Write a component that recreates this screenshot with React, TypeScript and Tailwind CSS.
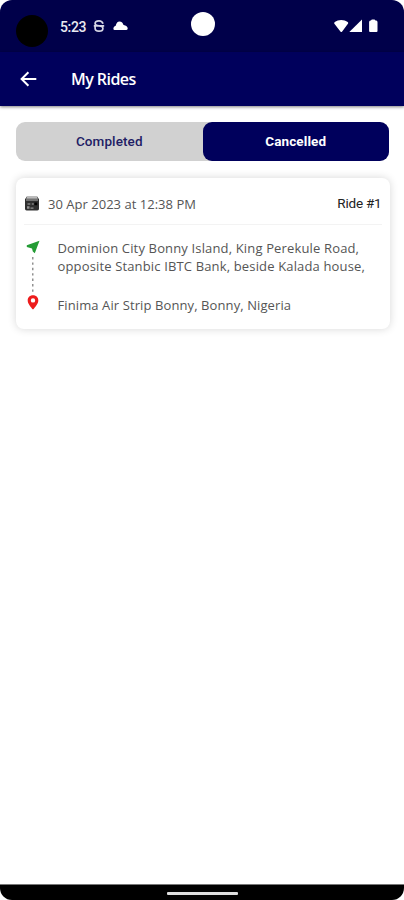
import { useState } from "react";
import clsx from "clsx";

type Tab = "Completed" | "Cancelled";

interface Ride {
  id: number;
  date: string;
  pickup: string[];
  dropoff: string;
}

const TABS: Tab[] = ["Completed", "Cancelled"];

const rides: Ride[] = [
  {
    id: 1,
    date: "30 Apr 2023 at 12:38 PM",
    pickup: [
      "Dominion City Bonny Island, King Perekule Road,",
      "opposite Stanbic IBTC Bank, beside Kalada house,",
    ],
    dropoff: "Finima Air Strip Bonny, Bonny, Nigeria",
  },
];

function StatusBar() {
  return (
    <div className="relative flex h-[52px] shrink-0 items-start bg-[#00004a] text-white">
      <div className="ml-4 mt-[15px] size-8 rounded-full bg-black" />
      <span className="ml-[12px] mt-[18px] w-[27px] font-['Roboto',sans-serif] text-[14px] leading-[18px] font-medium tracking-[-0.35px] whitespace-nowrap text-[#e9e9f0]">
        5:23
      </span>
      <svg className="ml-[6px] mt-5 h-3 w-3" viewBox="0 0 12 12" fill="none" stroke="#d6d6e4" strokeWidth="1.7">
        <path d="M10 3.8C9.4 1.7 8 .9 6 .9 3.5.9 2.1 2 2.1 3.6c0 1.5 1.1 2 3.9 2.2 2.8.2 3.9 1 3.9 2.6 0 1.6-1.4 2.7-3.9 2.7-2.4 0-3.9-.9-3.9-2.9V5.8M.8 5.8h10.4" />
      </svg>
      <svg className="ml-[8px] mt-[21px] h-[9px] w-[15px]" viewBox="0 0 15 9" fill="white">
        <path d="M1.5 9C.5 9 .4 8.4.4 7.6.4 6.1 1.4 5.2 2.7 4.7 3.3 1.9 4.7.4 6.5.4c2.1 0 3.6 1.5 4 3.7C13.2 4.6 14.7 5.8 14.7 7.6c0 .9-.4 1.4-1.3 1.4z" />
      </svg>
      {/* camera cutout */}
      <div className="absolute left-[191px] top-[12px] size-6 rounded-full bg-white" />
      <svg className="ml-auto mr-[25px] mt-[19px] h-[14px] w-[46px]" viewBox="0 0 46 14" fill="white">
        <path d="M1.2 4.5Q1 3.6 1.8 3C5.2.3 11.3.3 14.7 3q.8.6.4 1.5L9 12.7q-.7.8-1.4 0z" />
        <path d="M29 .6V13H16.3z" />
        <path d="M38 1.6Q38.3.6 39.2.6h2q.9 0 1.2 1h.8q1.3.4 1.3 1.6V12q0 1-1 1h-6.4q-1 0-1-1V3.2q0-1.2 1.3-1.6z" />
      </svg>
    </div>
  );
}

function AppBar() {
  return (
    <header className="relative z-10 flex h-[54px] shrink-0 items-center bg-[#00005c] shadow-[0_1px_3px_rgba(0,0,0,0.5)]">
      <button aria-label="Back" className="ml-5">
        <svg className="h-4 w-[17px]" viewBox="0 0 17 16" fill="none" stroke="white" strokeWidth="2">
          <path d="M8.4 1.2 1.6 8l6.8 6.8M1.8 8h14.5" />
        </svg>
      </button>
      <h1 className="ml-[34px] font-['Open_Sans',sans-serif] text-[16px] leading-6 font-semibold tracking-[-0.55px] text-white">
        My Rides
      </h1>
    </header>
  );
}

function CalendarIcon() {
  return (
    <svg className="h-[15px] w-[14px] shrink-0" viewBox="0 0 14 15">
      <path d="M1.5 2.5V1h11v1.5" fill="none" stroke="#777" />
      <path d="M0 2.5h14v10.3q0 1.6-1.6 1.6H1.6Q0 14.4 0 12.8z" fill="#303030" />
      <path d="M1 4h12" stroke="#b5b5b5" strokeWidth="1.2" />
      <path d="M2.5 8h2.8M6.8 8h2" stroke="#aaa" strokeWidth="1" />
      <path d="M2 10.2h2.5v2.6H2zM5.5 11.5h3v1.3h-3z" fill="#929292" />
      <path d="M9.4 6.5h2.8v2.7H9.4z" fill="#000" />
    </svg>
  );
}

function RideCard({ ride }: { ride: Ride }) {
  return (
    <article className="ml-4 mr-[14.5px] mt-[17px] h-[151px] rounded-[8px] bg-white px-2 font-['Open_Sans',sans-serif] shadow-[0_0_9px_rgba(0,0,0,0.16)]">
      <div className="flex h-[47px] items-center border-b border-[#f3f3f3] pt-[5px]">
        <span className="ml-[1px] flex">
          <CalendarIcon />
        </span>
        <span className="ml-[9px] text-[13px] leading-[18px] tracking-[0.02px] whitespace-nowrap text-[#555]">
          {ride.date}
        </span>
        <span className="ml-auto pb-[2px] font-['Roboto',sans-serif] text-[13.5px] leading-[18px] tracking-[-0.2px] whitespace-nowrap text-[#222]">
          Ride #{ride.id}
        </span>
      </div>

      <div className="flex pt-[14px]">
        <div className="flex w-[33.5px] shrink-0 flex-col pl-[2px] pt-[1px]">
          <svg className="h-[14px] w-[14px]" viewBox="0 0 14 14">
            <path d="M13.5.8 8.8 13.2 6.8 11.4 6 8.6.8 7V5.2z" fill="#249c35" />
          </svg>
          <svg className="my-[2px] ml-[5px] h-[37px] w-[3px]" viewBox="0 0 3 37">
            <path d="M1.8 1v35" stroke="#777" strokeWidth="1.2" strokeDasharray="2.4 3" />
          </svg>
          <svg className="ml-[1px] h-[15px] w-[12px]" viewBox="0 0 12 15">
            <path
              d="M6 .3C2.8.3.7 2.5.7 5.4.7 8.5 3.8 12 6 14.6 8.2 12 11.3 8.5 11.3 5.4 11.3 2.5 9.2.3 6 .3Zm0 2.9a2.2 2.2 0 1 1 0 4.4 2.2 2.2 0 0 1 0-4.4Z"
              fill="#ed1c1c"
              fillRule="evenodd"
            />
          </svg>
        </div>
        <div className="text-[13px] leading-[18px] tracking-[0.15px] whitespace-nowrap text-[#555]">
          {ride.pickup.map((line) => (
            <p key={line}>{line}</p>
          ))}
          <p className="mt-[21px] tracking-[0.1px]">{ride.dropoff}</p>
        </div>
      </div>
    </article>
  );
}

export default function App() {
  const [activeTab, setActiveTab] = useState<Tab>("Cancelled");

  return (
    <div className="flex h-[900px] w-[404px] flex-col overflow-hidden rounded-[12px] bg-white">
      <StatusBar />
      <AppBar />

      <main className="flex-1">
        <div className="ml-4 mr-[15px] mt-4 flex h-[39px] rounded-[9px] bg-[#d1d1d1]">
          {TABS.map((tab) => (
            <button
              key={tab}
              onClick={() => setActiveTab(tab)}
              className={clsx(
                "flex-1 rounded-[9px] font-['Roboto',sans-serif] text-[13.5px] tracking-[0.1px]",
                activeTab === tab
                  ? "bg-[#00005c] font-bold text-white"
                  : "font-medium text-[#211d65]"
              )}
            >
              {tab}
            </button>
          ))}
        </div>

        {rides.map((ride) => (
          <RideCard key={ride.id} ride={ride} />
        ))}
      </main>

      <div className="flex h-4 shrink-0 items-start justify-center border-t border-[#777] bg-black">
        <div className="mt-[7px] h-[3px] w-[71px] rounded-[1px] bg-[#dedede]" />
      </div>
    </div>
  );
}
